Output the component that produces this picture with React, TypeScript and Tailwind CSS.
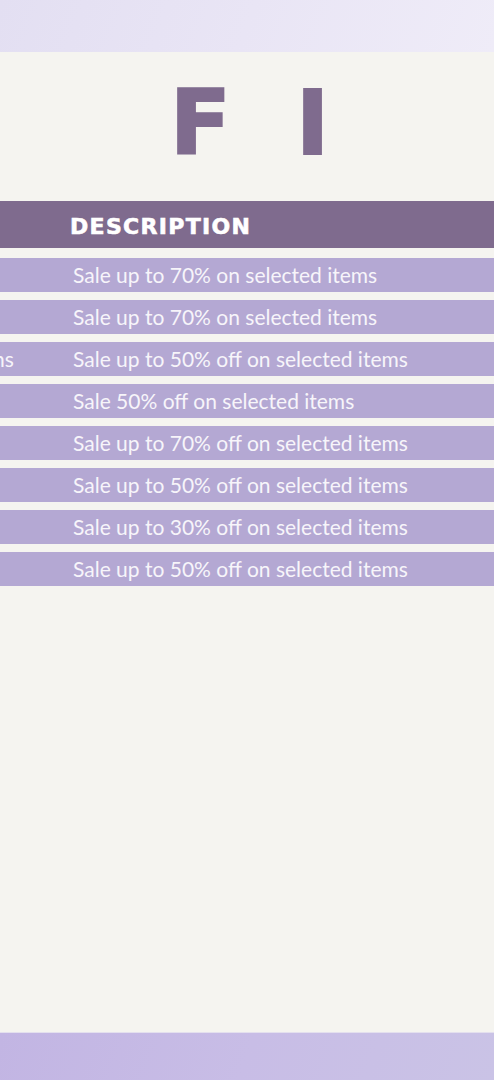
export default function App() {
  const rows = [
    { left: "", text: "Sale up to 70% on selected items" },
    { left: "", text: "Sale up to 70% on selected items" },
    { left: "ns", text: "Sale up to 50% off on selected items" },
    { left: "", text: "Sale 50% off on selected items" },
    { left: "", text: "Sale up to 70% off on selected items" },
    { left: "", text: "Sale up to 50% off on selected items" },
    { left: "", text: "Sale up to 30% off on selected items" },
    { left: "", text: "Sale up to 50% off on selected items" },
  ];
  return (
    <div className="w-[494px] h-[1080px] overflow-hidden flex flex-col bg-[#f5f4f0]" style={{ fontFamily: "Lato, 'Open Sans', sans-serif" }}>
      <div className="h-[52px] shrink-0 bg-[linear-gradient(110deg,#e3dff2_0%,#e9e5f5_50%,#efecf8_100%)]" />
      <div className="flex-1 flex flex-col">
        <div className="h-[149px] relative">
          <span className="absolute left-[170px] top-[27px] text-[#7f6b8e] text-[89px] leading-none font-bold [-webkit-text-stroke:2px_#7f6b8e]" style={{ fontFamily: "'DejaVu Sans', sans-serif" }}>F</span>
          <span className="absolute left-[296px] top-[27px] text-[#7f6b8e] text-[89px] leading-none font-bold [-webkit-text-stroke:2px_#7f6b8e]" style={{ fontFamily: "'DejaVu Sans', sans-serif" }}>I</span>
        </div>
        <div className="h-[47px] bg-[#7f6b8e] flex items-center pl-[70px]">
          <span className="mt-[3px] text-white text-[22px] font-bold tracking-[1.3px] [-webkit-text-stroke:0.6px_#ffffff]" style={{ fontFamily: "'DejaVu Sans', sans-serif" }}>DESCRIPTION</span>
        </div>
        <div className="flex flex-col gap-[8px] pt-[10px]">
          {rows.map((r, i) => (
            <div key={i} className="h-[34px] bg-[#b4a8d3] flex items-center text-[#f7f5fa] text-[21px]">
              <div className="w-[73px] shrink-0 overflow-hidden whitespace-nowrap">
                <span className="block -ml-[7px]">{r.left}</span>
              </div>
              <span className="whitespace-nowrap">{r.text}</span>
            </div>
          ))}
        </div>
        <div className="flex-1" />
      </div>
      <div className="h-[48px] shrink-0 border-t border-[#e4e0ee] bg-[linear-gradient(110deg,#c2b5e3_0%,#c8bde6_50%,#cac3e6_100%)]" />
    </div>
  );
}
